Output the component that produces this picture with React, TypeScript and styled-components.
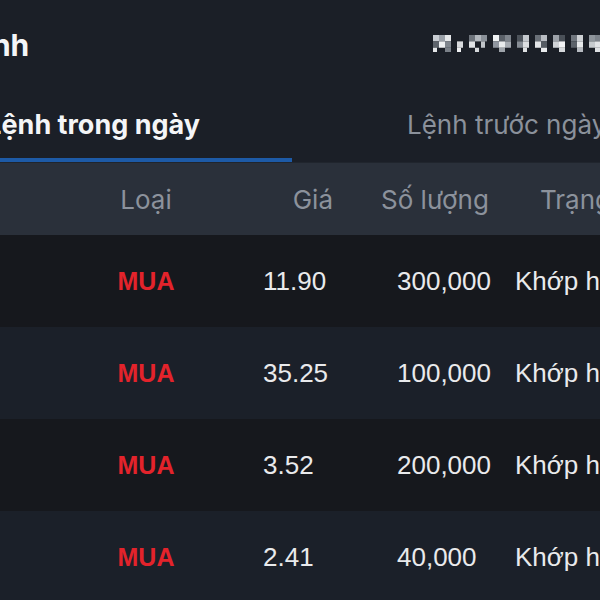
import styled, { createGlobalStyle } from "styled-components";

const GlobalStyle = createGlobalStyle`
  html, body {
    margin: 0;
    padding: 0;
    background: #15171c;
    overflow: hidden;
  }
  * {
    box-sizing: border-box;
  }
`;

const orders = [
  { side: "MUA", price: "11.90", qty: "300,000", status: "Khớp hết" },
  { side: "MUA", price: "35.25", qty: "100,000", status: "Khớp hết" },
  { side: "MUA", price: "3.52", qty: "200,000", status: "Khớp hết" },
  { side: "MUA", price: "2.41", qty: "40,000", status: "Khớp hết" },
];

// mosaic cells of the blurred timestamp, [x, y, w, h, shade]
const mosaic: [number, number, number, number, string][] = [
  [0, 0, 6, 6, "#c8ccd2"], [6, 0, 6, 6, "#9aa0a8"], [12, 0, 6, 6, "#e6e8ea"],
  [0, 6, 6, 6, "#5e646c"], [6, 6, 6, 6, "#eef0f2"], [12, 6, 6, 6, "#80868e"],
  [24, 6, 6, 6, "#d8dadd"], [36, 0, 6, 6, "#6d737b"], [42, 0, 6, 6, "#b2b7bd"],
  [48, 0, 6, 6, "#8a9098"], [36, 6, 6, 6, "#e0e2e5"], [48, 6, 4, 6, "#c0c4c9"],
  [60, 0, 6, 6, "#f0f2f4"], [66, 0, 6, 6, "#5a6068"], [72, 0, 6, 6, "#7e848c"],
  [60, 6, 6, 6, "#9096a0"], [66, 6, 6, 6, "#e9ebed"], [72, 6, 6, 6, "#a6abb2"],
  [84, 0, 6, 6, "#4c525a"], [90, 0, 6, 6, "#c4c8cd"], [84, 6, 6, 6, "#868c94"],
  [90, 6, 6, 6, "#dcdee1"], [102, 0, 6, 6, "#6a7078"], [108, 0, 6, 6, "#b8bcc2"],
  [102, 6, 6, 6, "#e3e5e8"], [108, 6, 6, 6, "#565c64"], [120, 0, 6, 6, "#9ca1a8"],
  [126, 0, 6, 6, "#4a5058"], [120, 6, 6, 6, "#d0d3d7"], [126, 6, 6, 6, "#f2f3f5"],
  [138, 0, 6, 6, "#70767e"], [144, 0, 6, 6, "#cfd2d6"], [138, 6, 6, 6, "#5c626a"],
  [144, 6, 6, 6, "#e8eaec"], [156, 0, 6, 6, "#8e949b"], [156, 6, 6, 6, "#c6cace"],
  [162, 0, 6, 6, "#7c828a"], [162, 6, 6, 6, "#e2e4e7"],
  [0, 12, 4, 4, "#e4e6e8"], [12, 12, 6, 4, "#7a8088"], [24, 12, 4, 4, "#f0f1f3"],
  [42, 12, 4, 4, "#d4d7da"], [66, 12, 6, 4, "#9ea3aa"], [90, 12, 4, 4, "#e0e2e4"],
  [108, 12, 6, 4, "#eaecee"], [126, 12, 6, 4, "#d6d9dc"], [144, 12, 6, 4, "#b6bac0"],
  [162, 12, 6, 4, "#dfe1e4"],
];

const App = () => {
  return (
    <Screen>
      <GlobalStyle />
      <TopBar>
        <TitleBox>
          <Title>Sổ lệnh</Title>
        </TitleBox>
        <Blurred width="168" height="17" viewBox="0 0 168 16" preserveAspectRatio="none">
          {mosaic.map(([x, y, w, h, c], i) => (
            <rect key={i} x={x} y={y} width={w} height={h} fill={c} />
          ))}
        </Blurred>
      </TopBar>

      <Tabs>
        <Tab active>
          <span>Lệnh trong ngày</span>
        </Tab>
        <Tab>
          <span>Lệnh trước ngày</span>
        </Tab>
      </Tabs>

      <HeadRow>
        <span />
        <HeadCell align="center">Loại</HeadCell>
        <HeadCell align="flex-end" pad="0 27px 0 0">
          Giá
        </HeadCell>
        <HeadCell pad="0 0 0 21px">Số lượng</HeadCell>
        <HeadCell pad="0 0 0 35px">Trạng thái</HeadCell>
      </HeadRow>

      {orders.map((o, i) => (
        <Row key={i} dark={i % 2 === 0}>
          <span />
          <Side>{o.side}</Side>
          <Cell pad="0 0 0 71px">{o.price}</Cell>
          <Cell pad="0 0 0 37px">{o.qty}</Cell>
          <Cell pad="0 0 0 10px">{o.status}</Cell>
        </Row>
      ))}
    </Screen>
  );
};

export default App;

const Screen = styled.div`
  width: 600px;
  height: 600px;
  overflow: hidden;
  background: #1b1f27;
  font-family: Inter, "Noto Sans", sans-serif;
`;

const TopBar = styled.div`
  height: 90px;
  display: flex;
  align-items: center;
  justify-content: space-between;
`;

// the screen is cropped on the left, so the title overflows past x=0
const TitleBox = styled.div`
  width: 29px;
  display: flex;
  justify-content: flex-end;
  white-space: nowrap;
`;

const Title = styled.h1`
  margin: 0;
  font-size: 30px;
  font-weight: 700;
  color: #f4f5f7;
  letter-spacing: -0.2px;
`;

const Blurred = styled.svg`
  display: block;
  margin-right: -1px;
  margin-bottom: 4px;
`;

const Tabs = styled.div`
  height: 73px;
  display: grid;
  grid-template-columns: 292px 1fr;
  border-bottom: 1px solid #20252d;
`;

const Tab = styled.div<{ active?: boolean }>`
  display: flex;
  align-items: center;
  min-width: 0;
  white-space: nowrap;
  justify-content: ${({ active }) => (active ? "flex-end" : "flex-start")};
  padding: ${({ active }) => (active ? "0 92px 0 0" : "0 0 0 115px")};
  border-bottom: 4px solid
    ${({ active }) => (active ? "#1d5aa6" : "transparent")};
  font-size: ${({ active }) => (active ? "27px" : "26px")};
  font-weight: ${({ active }) => (active ? 700 : 400)};
  color: ${({ active }) => (active ? "#f4f5f7" : "#8b919b")};
`;

const columns = "100px 92px 168px 145px 1fr";

const HeadRow = styled.div`
  height: 72px;
  display: grid;
  grid-template-columns: ${columns};
  background: #2a303a;
`;

const HeadCell = styled.div<{ align?: string; pad?: string }>`
  display: flex;
  align-items: center;
  justify-content: ${({ align }) => align || "flex-start"};
  padding: ${({ pad }) => pad || "0"};
  white-space: nowrap;
  font-size: 26px;
  color: #8c929c;
`;

const Row = styled.div<{ dark?: boolean }>`
  height: 92px;
  display: grid;
  grid-template-columns: ${columns};
  background: ${({ dark }) => (dark ? "#16181d" : "#1b2029")};
  font-family: "Liberation Sans", Arial, sans-serif;
`;

const Cell = styled.div<{ pad?: string }>`
  display: flex;
  align-items: center;
  padding: ${({ pad }) => pad || "0"};
  white-space: nowrap;
  font-size: 26px;
  color: #e9eaec;
`;

const Side = styled.div`
  display: flex;
  align-items: center;
  justify-content: center;
  font-size: 25px;
  font-weight: 700;
  color: #e3232b;
`;
